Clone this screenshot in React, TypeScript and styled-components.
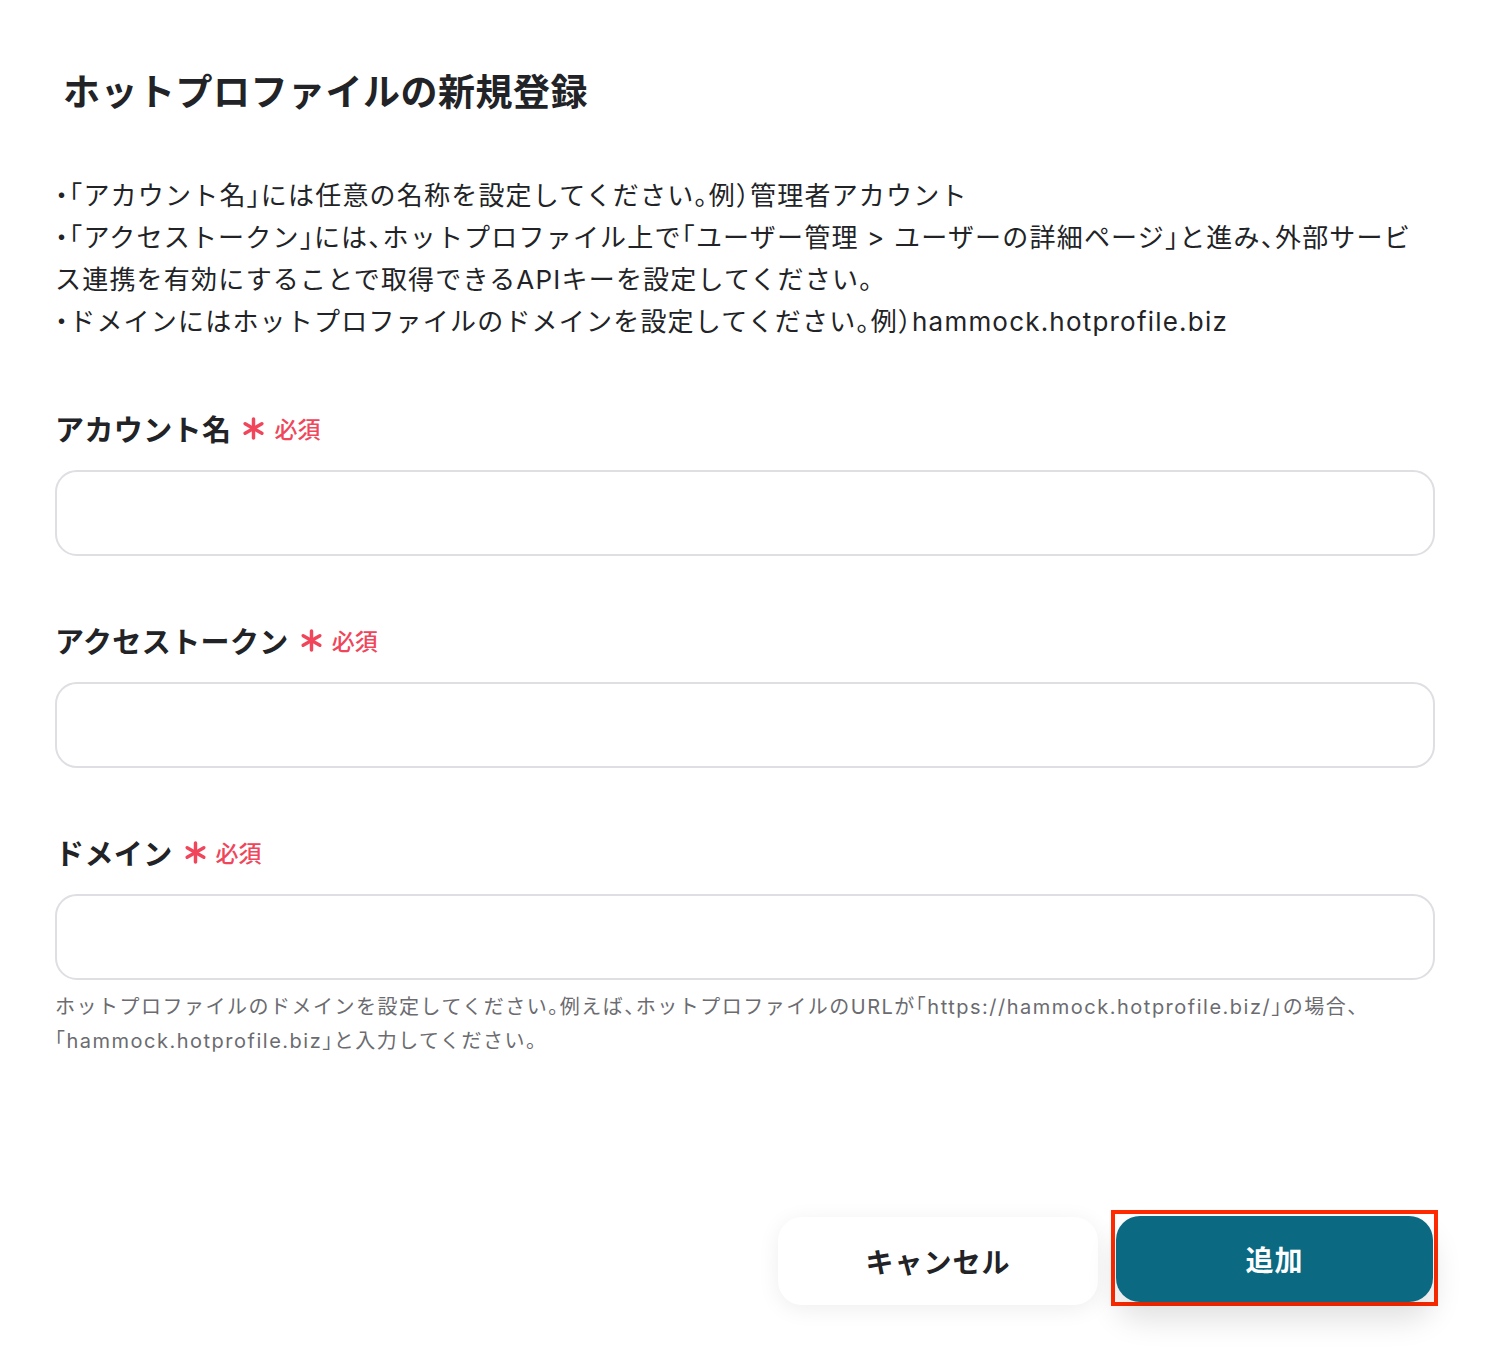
import React from "react";
import styled, { createGlobalStyle } from "styled-components";

const GlobalStyle = createGlobalStyle`
  html, body {
    margin: 0;
    padding: 0;
    background: #ffffff;
  }
  body {
    font-family: "Inter", "Noto Sans CJK JP", sans-serif;
    color: #222326;
  }
`;

const Page = styled.div`
  width: 1492px;
  min-height: 1352px;
  box-sizing: border-box;
  padding: 64px 57px 0 55px;
  display: flex;
  flex-direction: column;
`;

const Title = styled.h1`
  margin: 0 0 0 8px;
  font-size: 37px;
  line-height: 57px;
  font-weight: 700;
  letter-spacing: 0.5px;
  color: #222326;
`;

const Notes = styled.div`
  margin-top: 54px;
  font-size: 26px;
  line-height: 42px;
  font-weight: 400;
  letter-spacing: 1.2px;
  color: #222326;
  font-feature-settings: "halt";
`;

const NoteLine = styled.div``;

const Field = styled.div<{ $first?: boolean }>`
  display: flex;
  flex-direction: column;
  margin-top: ${(p) => (p.$first ? "65px" : "64px")};
`;

const LabelRow = styled.div`
  display: flex;
  align-items: center;
  height: 40px;
`;

const LabelText = styled.span`
  font-size: 29px;
  font-weight: 700;
  letter-spacing: 0.4px;
  color: #222326;
`;

const Asterisk = styled.svg`
  width: 23px;
  height: 23px;
  margin-left: 11px;
`;

const Required = styled.span`
  margin-left: 9px;
  font-size: 23px;
  font-weight: 500;
  color: #f0455a;
`;

const Input = styled.input`
  margin-top: 22px;
  height: 86px;
  box-sizing: border-box;
  width: 100%;
  border: 2px solid #dedee3;
  border-radius: 22px;
  background: #ffffff;
  padding: 0 24px;
  font-size: 24px;
  outline: none;
`;

const Help = styled.p`
  margin: 10px 0 0 0;
  font-size: 20px;
  line-height: 34px;
  letter-spacing: 1.5px;
  color: #6b6b70;
  font-feature-settings: "halt";
`;

const Footer = styled.div`
  margin-top: 152px;
  display: flex;
  justify-content: flex-end;
  align-items: center;
  gap: 13px;
  margin-right: -3px;
`;

const CancelButton = styled.button`
  width: 320px;
  height: 88px;
  margin-top: 6px;
  border: none;
  border-radius: 24px;
  background: #ffffff;
  box-shadow: 0 4px 22px rgba(0, 0, 0, 0.07);
  font-family: inherit;
  font-size: 28px;
  font-weight: 700;
  letter-spacing: 1px;
  color: #222326;
  cursor: pointer;
`;

const Highlight = styled.div`
  border: 4px solid #ff2a00;
  padding: 2px 1px 0px 1px;
  display: flex;
`;

const AddButton = styled.button`
  width: 317px;
  height: 86px;
  border: none;
  border-radius: 24px;
  background: #0b6a82;
  box-shadow: 0 18px 30px rgba(0, 0, 0, 0.12);
  font-family: inherit;
  font-size: 28px;
  font-weight: 700;
  letter-spacing: 1px;
  color: #ffffff;
  cursor: pointer;
`;

const AsteriskIcon = () => (
  <Asterisk viewBox="0 0 24 24">
    <g stroke="#f0455a" strokeWidth="3.6" strokeLinecap="round">
      <line x1="12" y1="2" x2="12" y2="22" />
      <line x1="3.3" y1="7" x2="20.7" y2="17" />
      <line x1="3.3" y1="17" x2="20.7" y2="7" />
    </g>
  </Asterisk>
);

const FieldBlock = ({ label, first }: { label: string; first?: boolean }) => (
  <Field $first={first}>
    <LabelRow>
      <LabelText>{label}</LabelText>
      <AsteriskIcon />
      <Required>必須</Required>
    </LabelRow>
    <Input type="text" />
  </Field>
);

export default function App() {
  return (
    <>
      <GlobalStyle />
      <Page>
        <Title>ホットプロファイルの新規登録</Title>
        <Notes>
          <NoteLine>・「アカウント名」には任意の名称を設定してください。例）管理者アカウント</NoteLine>
          <NoteLine>
            ・「アクセストークン」には、ホットプロファイル上で「ユーザー管理 &gt; ユーザーの詳細ページ」と進み、外部サービス連携を有効にすることで取得できるAPIキーを設定してください。
          </NoteLine>
          <NoteLine>・ドメインにはホットプロファイルのドメインを設定してください。例）hammock.hotprofile.biz</NoteLine>
        </Notes>
        <FieldBlock label="アカウント名" first />
        <FieldBlock label="アクセストークン" />
        <Field>
          <LabelRow>
            <LabelText>ドメイン</LabelText>
            <AsteriskIcon />
            <Required>必須</Required>
          </LabelRow>
          <Input type="text" />
          <Help>
            ホットプロファイルのドメインを設定してください。例えば、ホットプロファイルのURLが「https://hammock.hotprofile.biz/」の場合、
            <br />
            「hammock.hotprofile.biz」と入力してください。
          </Help>
        </Field>
        <Footer>
          <CancelButton type="button">キャンセル</CancelButton>
          <Highlight>
            <AddButton type="button">追加</AddButton>
          </Highlight>
        </Footer>
      </Page>
    </>
  );
}
